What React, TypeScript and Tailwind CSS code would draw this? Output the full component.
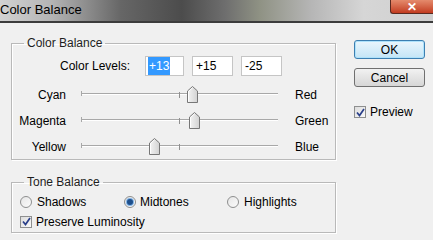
import React from 'react';

const FONT = { fontFamily: '"Liberation Sans", Arial, sans-serif' };

// track spans 197px, values run -100..100
const TRACK_W = 197;

const sliders = [
  { left: 'Cyan', right: 'Red', value: 13 },
  { left: 'Magenta', right: 'Green', value: 15 },
  { left: 'Yellow', right: 'Blue', value: -25 },
];

const Thumb = () => (
  <svg width="11" height="17" viewBox="0 0 11 17">
    <defs>
      <linearGradient id="thumbFill" x1="0" y1="0" x2="1" y2="0">
        <stop offset="0" stopColor="#f4f4f4" />
        <stop offset="1" stopColor="#d2d2d2" />
      </linearGradient>
    </defs>
    <path d="M0.5 16.5 V5 L5.5 0.5 L10.5 5 V16.5 Z" fill="url(#thumbFill)" stroke="#777" />
    <path d="M1.5 15.5 V5.5 L5.5 1.8" fill="none" stroke="#fff" />
  </svg>
);

const Slider = ({ value }: { value: number }) => {
  const center = TRACK_W / 2 + (value / 100) * (TRACK_W / 2);
  return (
    <div className="relative h-[20px] w-[197px]">
      <div className="absolute left-0 right-0 top-[9px] h-[2px] border-t border-[#a8a8a8] bg-white" />
      <div className="absolute left-0 top-[7px] h-[5px] w-px bg-[#a8a8a8]" />
      <div className="absolute left-[98px] top-[8px] h-[6px] w-px bg-[#909090]" />
      <div className="absolute top-[2px]" style={{ left: center - 5.5 }}>
        <Thumb />
      </div>
    </div>
  );
};

const Radio = ({ checked }: { checked?: boolean }) => (
  <span className="flex h-[12px] w-[12px] items-center justify-center rounded-full border border-[#8e8f8f] bg-gradient-to-br from-[#e6e6e6] to-[#fbfbfb]">
    {checked && <span className="h-[6px] w-[6px] rounded-full bg-[#1d4f8c] shadow-[0_0_0_1px_#7fb2e5]" />}
  </span>
);

const Check = () => (
  <span className="flex h-[12px] w-[12px] items-center justify-center border border-[#8e8f8f] bg-gradient-to-br from-[#dcdcdc] to-[#fafafa]">
    <svg width="9" height="9" viewBox="0 0 9 9">
      <path d="M1 4.5 L3.5 7.5 L8 1" fill="none" stroke="#2a3f8a" strokeWidth="1.7" />
    </svg>
  </span>
);

const fieldsetCls =
  'w-[325px] border border-[#b9b9b9] shadow-[inset_1px_1px_0_#fff,1px_1px_0_#fff]';

export default function App() {
  return (
    <div className="h-[240px] w-[433px] overflow-hidden bg-[#f0f0f0] text-[12px] text-black" style={FONT}>
      {/* title bar */}
      <div className="flex h-[21px] items-start justify-between bg-[linear-gradient(90deg,#d2d2d2_0%,#b4b4b4_12%,#666_28%,#4c4c4c_42%,#6e6e6e_52%,#8f9284_60%,#b6b6b6_72%,#d6d6d6_84%,#cfcfcf_100%)]">
        <span className="pt-[2px] text-[13px] leading-[15px]">Color Balance</span>
        <span className="flex h-[14px] w-[43px] items-center justify-center rounded-bl-[3px] border-b border-l border-[#5a2a20] bg-gradient-to-b from-[#e48a6c] to-[#c23a1e] text-[12px] font-bold leading-none text-white">
          ✕
        </span>
      </div>
      <div className="h-[2px] bg-[#3c3c3c]" />

      <div className="flex">
        {/* left column */}
        <div className="ml-[11px] flex flex-col">
          <fieldset className={`${fieldsetCls} mt-[13px] h-[124px]`}>
            <legend className="ml-[12px] px-[3px] leading-[14px] text-[#1e1e1e]">Color Balance</legend>
            <div className="mt-[6px] flex items-center">
              <span className="w-[118px] text-right">Color Levels:</span>
              <div className="ml-[15px] flex gap-[8px]">
                <div className="flex h-[20px] w-[39px] items-center border border-[#c5c5c5] bg-white pl-[2px]">
                  <span className="bg-[#3399ff] px-[1px] text-white">+13</span>
                </div>
                <div className="flex h-[20px] w-[41px] items-center border border-[#c5c5c5] bg-white pl-[3px]">+15</div>
                <div className="flex h-[20px] w-[41px] items-center border border-[#c5c5c5] bg-white pl-[3px]">-25</div>
              </div>
            </div>
            <div className="mt-[8px] flex flex-col gap-[6px]">
              {sliders.map((s) => (
                <div key={s.left} className="flex h-[20px] items-center">
                  <span className="w-[54px] pt-[2px] text-right">{s.left}</span>
                  <div className="ml-[15px]">
                    <Slider value={s.value} />
                  </div>
                  <span className="ml-[17px] pt-[2px]">{s.right}</span>
                </div>
              ))}
            </div>
          </fieldset>

          <fieldset className={`${fieldsetCls} mt-[15px] h-[58px]`}>
            <legend className="ml-[12px] px-[3px] leading-[14px] text-[#1e1e1e]">Tone Balance</legend>
            <div className="mt-[4px] flex h-[18px] items-center">
              <div className="ml-[8px] flex w-[104px] items-center gap-[5px]">
                <Radio />
                <span>Shadows</span>
              </div>
              <div className="flex w-[103px] items-center gap-[4px]">
                <Radio checked />
                <span>Midtones</span>
              </div>
              <div className="flex items-center gap-[5px]">
                <Radio />
                <span>Highlights</span>
              </div>
            </div>
            <div className="ml-[8px] mt-[1px] flex h-[19px] items-center gap-[4px]">
              <Check />
              <span>Preserve Luminosity</span>
            </div>
          </fieldset>
        </div>

        {/* right column */}
        <div className="ml-[18px] mt-[17px] flex flex-col">
          <button className="h-[19px] w-[71px] rounded-[3px] border border-[#3c7fb1] bg-gradient-to-b from-[#eaf6fd] to-[#c4e5f6] leading-none shadow-[inset_0_0_0_1px_#aee2fb]">
            OK
          </button>
          <button className="mt-[9px] h-[19px] w-[71px] rounded-[3px] border border-[#707070] bg-gradient-to-b from-[#f2f2f2] to-[#d6d6d6] leading-none">
            Cancel
          </button>
          <div className="mt-[16px] flex items-center gap-[4px]">
            <Check />
            <span>Preview</span>
          </div>
        </div>
      </div>
    </div>
  );
}
